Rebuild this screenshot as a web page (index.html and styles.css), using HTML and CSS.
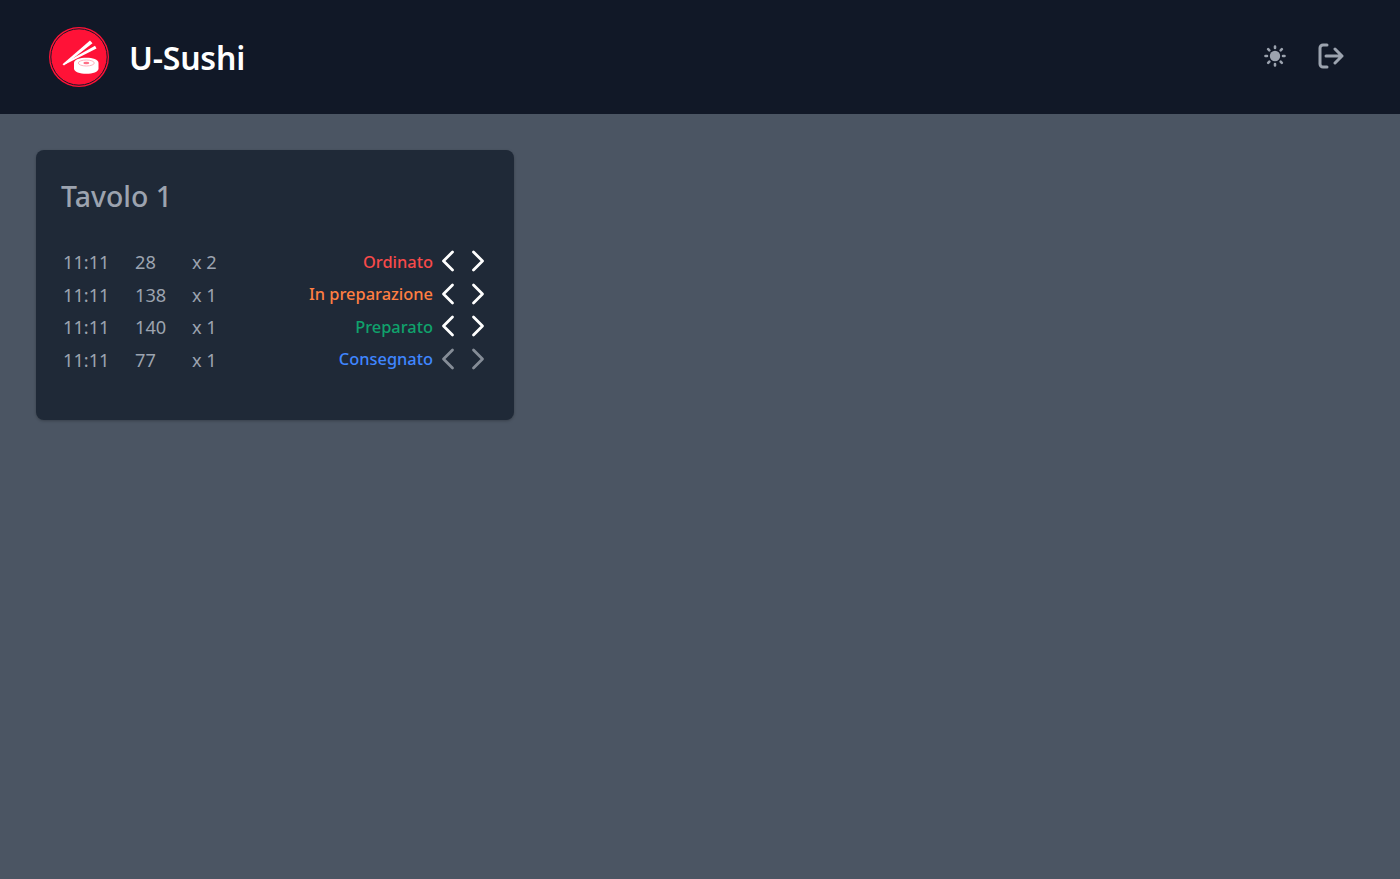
FILE: index.html
```html
<!DOCTYPE html>
<html lang="it">
<head>
<meta charset="utf-8">
<title>U-Sushi</title>
<link rel="stylesheet" href="styles.css">
</head>
<body>
<header class="topbar">
  <div class="brand">
    <svg class="logo" viewBox="0 0 60 60" aria-hidden="true">
      <circle cx="30" cy="30" r="30" fill="#ff1237"/>
      <circle cx="30" cy="30" r="28.200" fill="none" stroke="#111827" stroke-width="1"/>
      <polygon points="41,13.500 43.500,16.200 15,38.500 13.500,37.300" fill="#fff"/>
      <polygon points="46,18.800 47.500,21.500 16.500,37.200 15.500,36" fill="#fff"/>
      <path d="M25 36 C25 32.500 31 30.800 37.300 30.800 C43.600 30.800 49.500 32.500 49.500 36 V41.500 C49.500 45 43.600 46.800 37.300 46.800 C31 46.800 25 45 25 41.500 Z" fill="#fff"/>
      <ellipse cx="37.300" cy="36" rx="8" ry="3" fill="none" stroke="#ffb3bf" stroke-width="1"/>
      <ellipse cx="37.300" cy="36" rx="3" ry="1.200" fill="#ff6f86"/>
    </svg>
    <span class="brand-name">U-Sushi</span>
  </div>
  <div class="actions">
    <svg class="icon-sun" viewBox="0 0 24 24" aria-hidden="true">
      <circle cx="12" cy="12" r="5.200" fill="#9ca3af"/>
      <path d="M12 2.500v1.500M12 20v1.500M2.500 12H4M20 12h1.500M5.200 5.200l1.100 1.100M17.700 17.700l1.100 1.100M5.200 18.800l1.100-1.100M17.700 6.300l1.100-1.100" fill="none" stroke="#9ca3af" stroke-width="2.600" stroke-linecap="round"/>
    </svg>
    <svg class="icon-logout" viewBox="0 0 26 26" aria-hidden="true">
      <path d="M9 2H5a3 3 0 0 0-3 3v16a3 3 0 0 0 3 3h4M8 13h16M17 6l7 7-7 7" fill="none" stroke="#9ca3af" stroke-width="3" stroke-linecap="round" stroke-linejoin="round"/>
    </svg>
  </div>
</header>
<main class="content">
  <section class="card">
    <h2 class="card-title">Tavolo 1</h2>
    <div class="orders">
      <div class="order">
        <span class="time">11:11</span><span class="dish">28</span><span class="qty">x 2</span>
        <span class="status ordered">Ordinato</span>
        <svg class="chev" viewBox="0 0 16 22"><path d="M12.500 2 L3.500 11 L12.500 20"/></svg>
        <svg class="chev" viewBox="0 0 16 22"><path d="M3.500 2 L12.500 11 L3.500 20"/></svg>
      </div>
      <div class="order">
        <span class="time">11:11</span><span class="dish">138</span><span class="qty">x 1</span>
        <span class="status preparing">In preparazione</span>
        <svg class="chev" viewBox="0 0 16 22"><path d="M12.500 2 L3.500 11 L12.500 20"/></svg>
        <svg class="chev" viewBox="0 0 16 22"><path d="M3.500 2 L12.500 11 L3.500 20"/></svg>
      </div>
      <div class="order">
        <span class="time">11:11</span><span class="dish">140</span><span class="qty">x 1</span>
        <span class="status prepared">Preparato</span>
        <svg class="chev" viewBox="0 0 16 22"><path d="M12.500 2 L3.500 11 L12.500 20"/></svg>
        <svg class="chev" viewBox="0 0 16 22"><path d="M3.500 2 L12.500 11 L3.500 20"/></svg>
      </div>
      <div class="order">
        <span class="time">11:11</span><span class="dish">77</span><span class="qty">x 1</span>
        <span class="status delivered">Consegnato</span>
        <svg class="chev off" viewBox="0 0 16 22"><path d="M12.500 2 L3.500 11 L12.500 20"/></svg>
        <svg class="chev off" viewBox="0 0 16 22"><path d="M3.500 2 L12.500 11 L3.500 20"/></svg>
      </div>
    </div>
  </section>
</main>
</body>
</html>
```
FILE: styles.css
```css
* { box-sizing: border-box; }
html, body { height: 100%; }
body {
  margin: 0;
  min-height: 100%;
  display: flex;
  flex-direction: column;
  background: #4b5563;
  font-family: "Noto Sans", "Open Sans", sans-serif;
}
.topbar {
  height: 114px;
  flex: none;
  background: #111827;
  display: flex;
  align-items: center;
  justify-content: space-between;
  padding: 0 56px 0 49px;
}
.brand { display: flex; align-items: center; gap: 20px; }
.logo { width: 60px; height: 60px; display: block; }
.brand-name { color: #fff; font-size: 32px; font-weight: 600; line-height: 36px; margin-top: 2px; letter-spacing: -0.200px; }
.actions { display: flex; align-items: center; gap: 31px; }
.icon-sun { width: 24px; height: 24px; display: block; margin-top: -2px; }
.icon-logout { width: 26px; height: 26px; display: block; margin-top: -2px; }
.content { padding: 36px; flex: 1; }
.card {
  width: 478px;
  height: 270px;
  background: #1f2937;
  border-radius: 8px;
  box-shadow: 0 1px 3px rgba(0,0,0,.25);
  padding: 25px;
}
.card-title {
  margin: 0 0 29px;
  color: #9ca3af;
  font-size: 28.400px;
  font-weight: 500;
  line-height: 42px;
}
.orders { display: flex; flex-direction: column; padding: 0 3px 0 2px; }
.order {
  display: flex;
  align-items: center;
  height: 32.500px;
  color: #9ca3af;
  font-size: 18.200px;
}
.time { width: 72px; }
.dish { width: 57px; }
.qty { width: 40px; }
.status { margin: 0 7px 2px auto; font-size: 16.400px; font-weight: 500; }
.ordered { color: #f84a4a; }
.preparing { color: #ff7f42; }
.prepared { color: #10a26c; }
.delivered { color: #3f86ff; }
.chev { width: 16px; height: 22px; margin: 0 14px 2px 0; flex: none; }
.chev + .chev { margin-right: 0; }
.chev path { fill: none; stroke: #fff; stroke-width: 2.800; stroke-linecap: round; stroke-linejoin: round; }
.chev.off path { stroke: #858c97; }
```
